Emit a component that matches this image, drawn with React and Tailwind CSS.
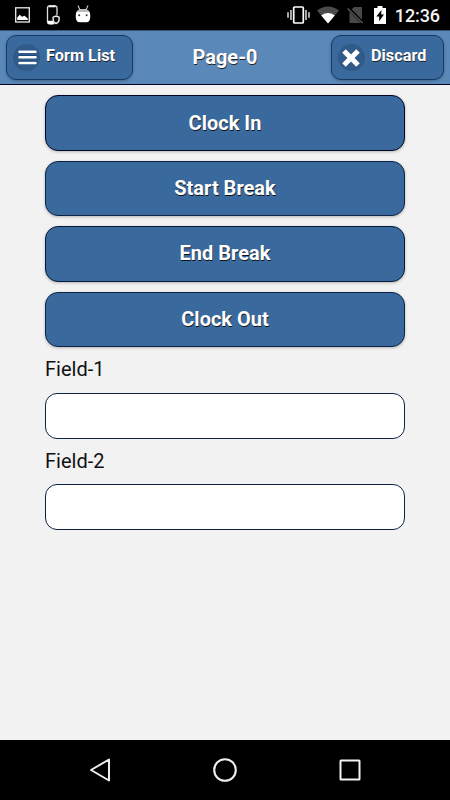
import React, { useState } from "react";

const actions = [
  { label: "Clock In", size: "h-14 border-[#000624]" },
  { label: "Start Break", size: "h-[55px] pb-px border-[#0b2344]" },
  { label: "End Break", size: "h-14 pb-[2px] border-[#061a38]" },
  { label: "Clock Out", size: "h-[55px] pb-px border-[#0b2344]" },
];

const StatusBar = () => (
  <div className="flex h-[30px] shrink-0 items-center bg-black pl-[15px] pr-[10px]">
    {/* Notifications */}
    <svg width="15" height="16" viewBox="0 0 15 16" className="shrink-0">
      <rect x="0.7" y="0.8" width="13.6" height="14.2" fill="none" stroke="#eee" strokeWidth="1.3" />
      <path d="M2.2 13V10.5L4.7 7.8L7 9.8L9.5 8.7L12.8 11.5V13Z" fill="#fff" />
    </svg>
    <svg width="14" height="20" viewBox="0 0 14 20" className="ml-4 shrink-0">
      <path d="M11 10V3Q11 1 9 1H3.5Q1.5 1 1.5 3V16.5Q1.5 18.8 3.5 18.8H7" fill="none" stroke="#ddd" strokeWidth="1.3" />
      <path d="M3 1.3H9.5" stroke="#eee" strokeWidth="2" />
      <path d="M1.5 15.7H6.5L9 19.3H3.5Q1.5 19.3 1.5 17Z" fill="#fff" />
      <path d="M10.1 11L13.1 12.2V14.5Q13.1 17.3 10.1 18.5Q7.1 17.3 7.1 14.5V12.2Z" fill="#000" stroke="#eee" strokeWidth="1.4" />
    </svg>
    <svg width="16" height="18" viewBox="0 0 16 18" className="ml-[15px] mb-[2px] shrink-0">
      <path d="M3 0.5L5 5M13 0.5L11 5" stroke="#ccc" strokeWidth="1.1" />
      <path d="M0.8 9.5Q1.2 4 8 4Q14.8 4 15.2 9.5V13Q14.5 17.3 11.5 17.3H4.5Q1.5 17.3 0.8 13Z" fill="#fff" />
      <path d="M1.5 7Q3 4 8 4Q13 4 14.5 7Z" fill="#bbb" />
      <circle cx="4.2" cy="10.3" r="1" fill="#333" />
      <circle cx="11.6" cy="10.3" r="1" fill="#333" />
    </svg>

    {/* Device state */}
    <svg width="23" height="18" viewBox="0 0 23 18" className="ml-auto shrink-0">
      <rect x="6.7" y="1" width="9.6" height="16" rx="1" fill="none" stroke="#fff" strokeWidth="1.7" />
      <path d="M4 4V14M19 4V14" stroke="#eee" strokeWidth="1.4" />
      <path d="M1 6.2V11.8M22 6.2V11.8" stroke="#eee" strokeWidth="1.4" />
    </svg>
    <svg width="22" height="18" viewBox="0 0 22 18" className="ml-[7px] shrink-0">
      <path d="M0 4.5Q11 -3.6 22 4.5L11 17.5Z" fill="#4b4b4b" />
      <path d="M4.2 9.5Q11 4.7 17.8 9.5L11 17.5Z" fill="#fff" />
    </svg>
    <svg width="17" height="18" viewBox="0 0 17 18" className="ml-2 shrink-0">
      <path d="M2.5 5.5L7 1H15V17H2.5Z" fill="#484848" />
      <path d="M0.5 1.5L16 17" stroke="#000" strokeWidth="3.2" />
      <path d="M0.5 2.5L15.5 17" stroke="#555" strokeWidth="1.5" />
    </svg>
    <svg width="12" height="18" viewBox="0 0 12 18" className="ml-[10px] shrink-0">
      <path d="M0 2H3.5V0H8.5V2H12V18H0Z" fill="#fff" />
      <path d="M7.5 4L2.3 10.6H5.2V15.3L10 8.5H7.2Z" fill="#000" />
    </svg>
    <span className="ml-[9px] pt-[2px] text-[18px] font-medium leading-none tracking-[-0.1px] text-[#f4f4f4]">12:36</span>
  </div>
);

const HeaderButton = ({ icon, label, className }) => (
  <button
    type="button"
    className={`flex h-[45px] items-center rounded-[10px] border border-[#153a65] bg-[#39699d] pl-[6px] text-white shadow-[0_1px_3px_rgba(0,0,0,0.25)] ${className}`}
  >
    <span className="flex size-[27px] items-center justify-center rounded-full bg-[#305a88]">{icon}</span>
    <span className="ml-[6px] pb-[3px] text-[16.3px] font-bold leading-5 [text-shadow:0.5px_1px_0_#222]">{label}</span>
  </button>
);

const Header = () => (
  <header className="flex h-[55px] shrink-0 items-center justify-between border-b border-t border-b-[#030322] border-t-[#38506f] bg-[#5a88b8] pl-[6px] pr-[6px]">
    <HeaderButton
      className="w-[127px]"
      label="Form List"
      icon={
        <svg width="19" height="15" viewBox="0 0 19 15" className="ml-px">
          <path d="M1.5 0.7H17.5M1.5 6.3H17.5M1.5 11.9H17.5" stroke="#12457c" strokeWidth="2.2" strokeLinecap="round" />
          <path d="M1.5 1.7H17.5M1.5 7.3H17.5M1.5 12.9H17.5" stroke="#fff" strokeWidth="2.5" strokeLinecap="round" />
        </svg>
      }
    />
    <h1 className="pb-px pr-[14px] text-xl font-bold leading-6 text-white [text-shadow:0.5px_1px_0_#222]">Page-0</h1>
    <HeaderButton
      className="w-[113px]"
      label="Discard"
      icon={
        <svg width="20" height="20" viewBox="0 0 20 20">
          <path d="M3 3L17 17M17 3L3 17" stroke="#fff" strokeWidth="5" />
        </svg>
      }
    />
  </header>
);

const Field = ({ name, value, onChange }) => (
  <label className="block">
    <span className="flex h-[45.6px] items-start pt-[10px] text-xl leading-6 text-[#111]">{name}</span>
    <input
      type="text"
      name={name}
      value={value}
      onChange={onChange}
      className="block h-[45.7px] w-full rounded-[12px] border border-[#0b2344] bg-white px-3 text-xl outline-none"
    />
  </label>
);

export default function App() {
  const [values, setValues] = useState({ "Field-1": "", "Field-2": "" });

  const handleChange = (e) => {
    const { name, value } = e.target;
    setValues((prev) => ({ ...prev, [name]: value }));
  };

  return (
    <div className="flex h-[800px] w-[450px] flex-col overflow-hidden bg-[#f2f2f2] font-['Roboto',sans-serif]">
      <StatusBar />
      <Header />
      <main className="flex-1 px-[45px] pt-[10px]">
        <div className="flex flex-col gap-[10.15px]">
          {actions.map(({ label, size }) => (
            <button
              key={label}
              type="button"
              className={`flex w-full items-center justify-center rounded-[13px] border bg-[#39699d] text-xl font-bold leading-6 text-white shadow-[0_1px_3px_rgba(0,0,0,0.25)] [text-shadow:0.5px_1px_0_#111] ${size}`}
            >
              {label}
            </button>
          ))}
        </div>
        <div>
          {Object.entries(values).map(([name, value]) => (
            <Field key={name} name={name} value={value} onChange={handleChange} />
          ))}
        </div>
      </main>

      {/* System navigation */}
      <nav className="flex h-[60px] shrink-0 items-center justify-between bg-black px-[88px]">
        <svg width="24" height="26" viewBox="0 0 24 26">
          <path d="M21 2.5V23.5L3 13Z" fill="none" stroke="#eee" strokeWidth="2" strokeLinejoin="round" />
        </svg>
        <svg width="26" height="26" viewBox="0 0 26 26">
          <circle cx="13" cy="13" r="10.8" fill="none" stroke="#eee" strokeWidth="2.1" />
        </svg>
        <svg width="24" height="24" viewBox="0 0 24 24">
          <rect x="2.5" y="2.5" width="19" height="19" rx="0.5" fill="none" stroke="#f2f2f2" strokeWidth="2" />
        </svg>
      </nav>
    </div>
  );
}
